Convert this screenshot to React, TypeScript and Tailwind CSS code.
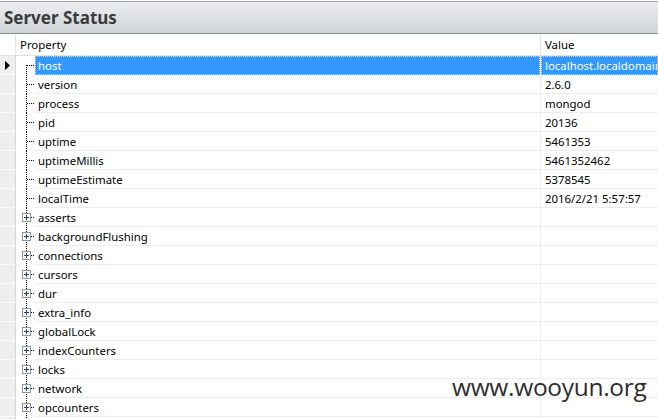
const rows: { name: string; value: string; expand?: boolean }[] = [
  { name: "host", value: "localhost.localdomain" },
  { name: "version", value: "2.6.0" },
  { name: "process", value: "mongod" },
  { name: "pid", value: "20136" },
  { name: "uptime", value: "5461353" },
  { name: "uptimeMillis", value: "5461352462" },
  { name: "uptimeEstimate", value: "5378545" },
  { name: "localTime", value: "2016/2/21 5:57:57" },
  { name: "asserts", value: "", expand: true },
  { name: "backgroundFlushing", value: "", expand: true },
  { name: "connections", value: "", expand: true },
  { name: "cursors", value: "", expand: true },
  { name: "dur", value: "", expand: true },
  { name: "extra_info", value: "", expand: true },
  { name: "globalLock", value: "", expand: true },
  { name: "indexCounters", value: "", expand: true },
  { name: "locks", value: "", expand: true },
  { name: "network", value: "", expand: true },
  { name: "opcounters", value: "", expand: true },
  { name: "opcountersRepl", value: "", expand: true },
];

function Tree({ first, expand }: { first: boolean; expand?: boolean }) {
  return (
    <svg width="19" height="19" className="shrink-0" shapeRendering="crispEdges">
      <line x1="10.5" y1={first ? 9 : 0} x2="10.5" y2={expand ? 5 : 19} stroke="#000" strokeDasharray="1 1" />
      {expand && <line x1="10.5" y1="15" x2="10.5" y2="19" stroke="#000" strokeDasharray="1 1" />}
      <line x1={expand ? 15 : 11} y1="9.5" x2="19" y2="9.5" stroke="#000" strokeDasharray="1 1" />
      {expand && (
        <g>
          <rect x="6.5" y="5.5" width="8" height="8" fill="#fdfdfd" stroke="#8c97a8" />
          <line x1="8" y1="9.5" x2="13" y2="9.5" stroke="#2c3f66" />
          <line x1="10.5" y1="7" x2="10.5" y2="12" stroke="#2c3f66" />
        </g>
      )}
    </svg>
  );
}

export default function App() {
  return (
    <div className="relative w-[658px] h-[419px] overflow-hidden bg-white font-['Noto_Sans',sans-serif] text-[11.4px] text-black">
      <div className="h-[33px] border-t border-b border-t-[#a0a4aa] border-b-[#868b92] mt-px bg-gradient-to-b from-[#eceef1] to-[#d0d3d7] flex items-center px-[4px]">
        <span className="text-[17px] font-bold text-[#3a3a3a] leading-none">Server Status</span>
      </div>
      <div className="flex h-[22px] border-b border-[#e2e2e2]">
        <div className="w-[16px] shrink-0 border-r border-[#e4e4e4]" />
        <div className="w-[525px] shrink-0 border-r border-[#e4e4e4] flex items-center pl-[4px]">Property</div>
        <div className="flex-1 flex items-center pl-[4px]">Value</div>
      </div>
      {rows.map((r, i) => {
        const sel = i === 0;
        return (
          <div key={r.name} className="flex h-[19px]">
            <div className="w-[16px] shrink-0 bg-[#eeeeee] border-b border-b-[#fafafa] border-r border-r-[#d6d6d6] flex items-center pl-[5px]">
              {sel && (
                <svg width="5" height="9">
                  <path d="M0 0 L5 4.5 L0 9 Z" fill="#000" />
                </svg>
              )}
            </div>
            <div className="w-[525px] shrink-0 flex border-r border-[#ececec]">
              <Tree first={i === 0} expand={r.expand} />
              <div
                className={
                  sel
                    ? "flex-1 flex items-center pl-[2px] bg-[#3399ff] text-white border border-dotted border-[#bcdcff] pt-px"
                    : "flex-1 flex items-center pl-[3px] border-b border-[#ececec] whitespace-nowrap pt-px"
                }
              >
                {r.name}
              </div>
            </div>
            <div
              className={
                sel
                  ? "flex-1 flex items-center pl-[3px] bg-[#3399ff] text-white border border-dotted border-[#bcdcff] whitespace-nowrap overflow-hidden pt-px"
                  : "flex-1 flex items-center pl-[4px] border-b border-[#ececec] whitespace-nowrap overflow-hidden pt-px"
              }
            >
              {r.value}
            </div>
          </div>
        );
      })}
      <div className="absolute left-[452px] top-[375px] text-[24.5px] leading-none text-[#2e2e2e] font-['Open_Sans',sans-serif] tracking-[-0.3px]">
        www.wooyun.org
      </div>
    </div>
  );
}
